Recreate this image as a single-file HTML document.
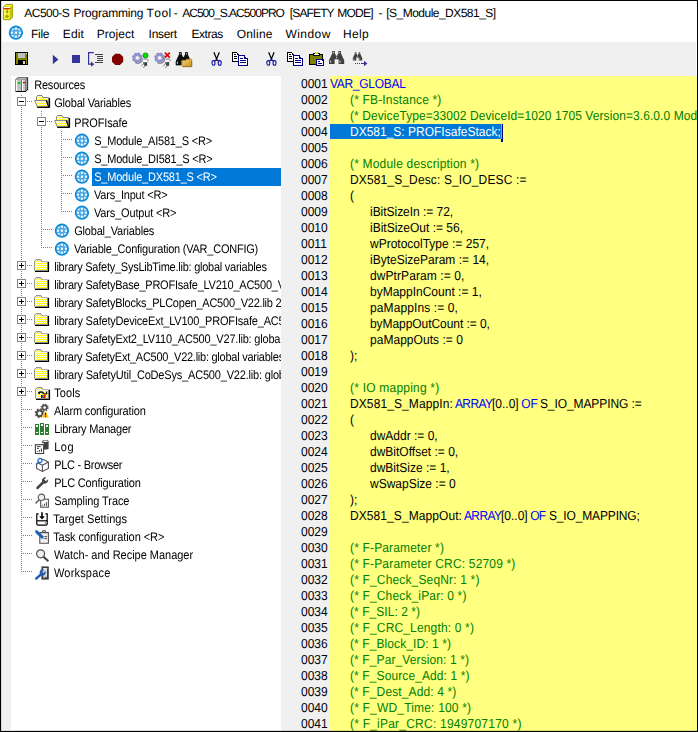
<!DOCTYPE html>
<html><head><meta charset="utf-8"><title>AC500-S Programming Tool</title>
<style>
html,body{margin:0;padding:0;background:#fff;}
body{text-rendering:geometricPrecision;width:698px;height:732px;overflow:hidden;position:relative;font-family:"Liberation Sans",sans-serif;}
#win{position:absolute;left:0;top:0;width:698px;height:732px;overflow:hidden;background:#fff;}
.abs{position:absolute;}
.t{position:absolute;white-space:pre;line-height:16px;height:16px;}
.ttl{font-size:12px;color:#000;font-kerning:none;}
.menu{font-size:12px;color:#000;}
.tr{font-size:11px;color:#000;transform:scaleY(1.13);transform-origin:0 0;}
.sel{color:#fff;}
.ln{font-size:12px;color:#000;left:301px;transform:scaleY(1.09);transform-origin:0 12px;}
.cd{font-size:12px;color:#000;transform:scaleY(1.09);transform-origin:0 12px;}
.k{color:#0000ff}.c{color:#008000}.n{color:#000}.s{color:#fff}
svg{position:absolute;overflow:visible;}
</style></head><body><div id="win">

<div class="abs" style="left:2px;top:42px;width:694px;height:34px;background:#f0f0f0"></div>
<div class="abs" style="left:2px;top:76px;width:9px;height:654px;background:#f0f0f0"></div>
<div class="abs" style="left:281px;top:76px;width:48px;height:655px;background:#f0f0f0"></div>
<div class="abs" style="left:329px;top:76px;width:368px;height:655px;background:#ffff80"></div>
<div class="abs" style="left:92px;top:168px;width:189px;height:18px;background:#0078d7"></div>
<div class="abs" style="left:330px;top:124px;width:171px;height:15px;background:#0078d7"></div>
<div class="abs" style="left:501px;top:124px;width:2px;height:18px;background:#00007f"></div>
<div class="abs" style="left:501px;top:124px;width:1px;height:15px;background:#ff8728"></div>
<svg style="left:3px;top:4px" width="11" height="17" viewBox="0 0 11 17"><path d="M0.4 3.2L3.2 0.4H9.5V13L7.3 15.7H0.4z" fill="#f8f83c" stroke="#8c8c00" stroke-width="0.9"/><path d="M7.3 3.2L9.5 0.6V13L7.3 15.6z" fill="#c4c400"/><path d="M0.5 3.1H7.3V15.5" fill="none" stroke="#b0b000" stroke-width="0.7"/><rect x="1" y="3.1" width="6" height="1.1" fill="#fff"/><rect x="1" y="4.1" width="6" height="1" fill="#e00010"/><path d="M2.8 5.9h2v1.4h-1.2h1.2v1.5h-2.1" fill="none" stroke="#8c8c00" stroke-width="0.9"/><rect x="1" y="9.1" width="2" height="0.9" fill="#fff"/><ellipse cx="4" cy="12.5" rx="2.1" ry="1.3" fill="#a8a800"/><path d="M4 10.8v3.4" stroke="#a8a800" stroke-width="1.4"/></svg>
<div class="t ttl" style="left:24.30px;top:5px;letter-spacing:-0.533px">AC500-S</div>
<div class="t ttl" style="left:73.40px;top:5px;letter-spacing:-0.192px">Programming</div>
<div class="t ttl" style="left:146.50px;top:5px;letter-spacing:0.450px">Tool</div>
<div class="t ttl" style="left:173.80px;top:5px;letter-spacing:0.000px">-</div>
<div class="t ttl" style="left:182.20px;top:5px;letter-spacing:-0.976px">AC500_S.AC500PRO</div>
<div class="t ttl" style="left:289.80px;top:5px;letter-spacing:-0.867px">[SAFETY</div>
<div class="t ttl" style="left:337.20px;top:5px;letter-spacing:-0.760px">MODE]</div>
<div class="t ttl" style="left:378.50px;top:5px;letter-spacing:0.000px">-</div>
<div class="t ttl" style="left:386.30px;top:5px;letter-spacing:-0.527px">[S_Module_DX581_S]</div>
<svg style="left:8.2px;top:24.4px" width="16" height="17" viewBox="0 0 16 17"><use href="#globe"/></svg>
<div class="t menu" style="left:31.02px;top:26px;letter-spacing:-0.300px">File</div>
<div class="t menu" style="left:62.84px;top:26px;letter-spacing:0.127px">Edit</div>
<div class="t menu" style="left:96.84px;top:26px;letter-spacing:0.007px">Project</div>
<div class="t menu" style="left:148.60px;top:26px;letter-spacing:-0.300px">Insert</div>
<div class="t menu" style="left:191.50px;top:26px;letter-spacing:-0.476px">Extras</div>
<div class="t menu" style="left:236.70px;top:26px;letter-spacing:0.212px">Online</div>
<div class="t menu" style="left:285.40px;top:26px;letter-spacing:0.468px">Window</div>
<div class="t menu" style="left:343.02px;top:26px;letter-spacing:0.340px">Help</div>
<svg width="0" height="0" style="position:absolute"><defs>
<pattern id="dith" width="2" height="2" patternUnits="userSpaceOnUse"><rect width="2" height="2" fill="#ffff00"/><rect width="1" height="1" fill="#fff"/><rect x="1" y="1" width="1" height="1" fill="#fff"/></pattern>
<linearGradient id="gold" x1="0" y1="0" x2="1" y2="1"><stop offset="0" stop-color="#f7d070"/><stop offset="1" stop-color="#c8901c"/></linearGradient>
<g id="globe"><circle cx="7.9" cy="8.7" r="6.4" fill="#48a8e8" stroke="#0a8ad8" stroke-width="1.5"/><g fill="#fff"><rect x="6.8" y="7.6" width="2.2" height="2.2"/><rect x="2.9" y="7.6" width="2" height="2.2"/><rect x="10.9" y="7.6" width="2" height="2.2"/><rect x="6.8" y="3.7" width="2.2" height="2"/><rect x="6.8" y="11.7" width="2.2" height="2"/><path d="M5.5 3.9v2.4H3.2zM10.3 3.9v2.4h2.3zM5.5 13.5v-2.4H3.2zM10.3 13.5v-2.4h2.3z"/></g></g>
<g id="fopen"><path d="M15 4h1.1v9.7H3.4L3 12.9h12z" fill="#000"/><path d="M2.5 6.6V2.7L3.5 1.5H8L9 3.5H14.5V7" fill="url(#dith)" stroke="#808080" stroke-width="1"/><path d="M3.4 6V3.2" stroke="#fff" stroke-width="0.8"/><path d="M12 6.4H15V13H14.6z" fill="#707070"/><path d="M0.6 6.5H12.2L14.6 13H3.3z" fill="url(#dith)"/><path d="M3.4 13L0.7 6.5H12" fill="none" stroke="#808080" stroke-width="1"/><path d="M1.8 7.4H11.6" stroke="#fff" stroke-width="0.8"/><path d="M12.1 6.3L14.7 13.1H3.4" stroke="#000" stroke-width="1.1" fill="none"/></g>
<g id="fclosed"><path d="M0.7 12.6V3.2L2 1.7H7L8 3.8H13.5V12.6z" fill="url(#dith)" stroke="#808080" stroke-width="1"/><path d="M1.7 12.4V4.3H13" fill="none" stroke="#fff" stroke-width="0.9"/><path d="M14 3.8H15.1V14H1V12.9H14z" fill="#000"/></g>
<g id="plus" shape-rendering="crispEdges"><rect x="0.5" y="0.5" width="8" height="8" fill="#fff" stroke="#848484"/><path d="M2 4h5v1H2zM4 2h1v5H4z" fill="#000"/></g>
<g id="minus" shape-rendering="crispEdges"><rect x="0.5" y="0.5" width="8" height="8" fill="#fff" stroke="#848484"/><path d="M2 4h5v1H2z" fill="#000"/></g>
<g id="gear"><path d="M2.6 9.6A4.6 4.6 0 0 0 9.8 6.6" fill="none" stroke="#8a8a8a" stroke-width="1.4" transform="translate(0.5,0.6)"/><circle cx="5.2" cy="5.7" r="3.5" fill="none" stroke="#9494cc" stroke-width="2.6"/><circle cx="5.2" cy="5.7" r="4.7" fill="none" stroke="#8c8cc6" stroke-width="1.5" stroke-dasharray="2.1 1.59"/><circle cx="5.2" cy="5.7" r="2.1" fill="#f6f6f6" stroke="#7c7ca8" stroke-width="0.5"/></g>
<g id="plug"><rect x="1.2" y="-0.4" width="4.6" height="2.6" fill="#fff"/><path d="M1.4 -0.5H5.4c0.7 0 0.7 2.6 0 2.6" fill="none" stroke="#505050" stroke-width="0.7"/><rect x="2.2" y="2.6" width="2.9" height="3.6" fill="#3c3c3c"/><rect x="1" y="2.4" width="1.2" height="1.8" fill="#10909a"/><path d="M1.2 4.6L-1 6.8M3.2 6.4L1 8.6" stroke="#303030" stroke-width="0.9" stroke-dasharray="1 0.8"/></g>
<g id="scis"><path d="M2.3 0.3L5.6 8.6M7.7 0.3L4.4 8.6" stroke="#000" stroke-width="1.2" fill="none"/><ellipse cx="1.9" cy="11" rx="1.5" ry="2.3" fill="none" stroke="#1414a8" stroke-width="1.1"/><ellipse cx="8.1" cy="11" rx="1.5" ry="2.3" fill="none" stroke="#1414a8" stroke-width="1.1"/><path d="M4.6 8.2L2.8 9.2M5.4 8.2L7.2 9.2" stroke="#1414a8" stroke-width="1.1"/></g>
<g id="copy" shape-rendering="crispEdges"><path d="M0 0h5l2 2v8H0z" fill="#000"/><path d="M1 1h4v2h1v6H1z" fill="#fff"/><path d="M2 2h2v1H2zM2 4h3v1H2zM2 6h3v1H2z" fill="#000"/><path d="M6 3h7l3 3v8H6z" fill="#000080"/><path d="M7 4h5v3h3v6H7z" fill="#fff"/><path d="M8 6h3v1H8zM8 8h6v1H8zM8 10h6v1H8z" fill="#000080"/><path d="M13 4h1v1h-1zM14 5h1v1h-1z" fill="#fff"/></g>
<g id="bino"><path d="M3.2 0h2.6v2.5l1 1.2v1h1.6v-1l1-1.2V0H12v2.5l3.2 6.7V13H9.6V8.2H5.6V13H0V9.2l3.2-6.7z" fill="#404040"/><path d="M4.5 1v1.2M10.7 1v1.2M1.6 9.5v2.2M11 9.5v2.2M7.6 5.6v1.6" stroke="#e8e8e8" stroke-width="0.9"/></g>
</defs></svg><svg style="left:0;top:42px" width="698" height="34" viewBox="0 42 698 34"><g shape-rendering="crispEdges"><rect x="15" y="52" width="13" height="13" fill="#000"/><rect x="16" y="53" width="11" height="11" fill="#808000"/><rect x="18" y="53" width="7" height="5" fill="#c0c0c0"/><rect x="26" y="53" width="1" height="1" fill="#fff"/><rect x="18" y="60" width="8" height="4" fill="#000"/><rect x="23" y="61" width="2" height="3" fill="#d8d8d8"/><rect x="17" y="58" width="9" height="1" fill="#808000"/></g><path d="M52.8 54.8L58.4 59.5L52.8 64.2z" fill="#333399"/><rect x="72" y="55" width="8" height="8" fill="#333399" shape-rendering="crispEdges"/><path d="M93.8 52.6H88.6V64.2H92" fill="none" stroke="#333399" stroke-width="1.2"/><path d="M91 61.6L94.2 64.2L91 66.8z" fill="#333399"/><g shape-rendering="crispEdges" fill="#404040"><rect x="95" y="54" width="8" height="1"/><rect x="97" y="56" width="6" height="1"/><rect x="97" y="58" width="6" height="1"/><rect x="97" y="60" width="6" height="1"/><rect x="95" y="62" width="8" height="1"/></g><path d="M115.3 53.8h4.6l3.3 3.3v4.6l-3.3 3.3h-4.6l-3.3-3.3v-4.6z" fill="#800000"/><use href="#gear" x="132.2" y="52.2"/><circle cx="145.5" cy="55.4" r="2.5" fill="#00e000" stroke="#008c00" stroke-width="0.8"/><use href="#plug" x="142" y="59.6"/><use href="#gear" x="154.4" y="52.2"/><path d="M164.8 52.6L169.8 57.6M169.8 52.6L164.8 57.6" stroke="#e00000" stroke-width="1.7"/><use href="#plug" x="164" y="59.6"/><g transform="translate(175.8,52.2)"><use href="#bino" fill="#000"/><path d="M3.2 0h2.6v2.5l1 1.2v1h1.6v-1l1-1.2V0H12v2.5l3.2 6.7V13H9.6V8.2H5.6V13H0V9.2l3.2-6.7z" fill="#101010"/><path d="M1.6 9.5v2.2M4.5 1v1.2M10.7 1v1.2" stroke="#e8e8e8" stroke-width="0.9"/></g><path d="M182.3 60.4h3.2l1 -1.2h5.2v7.4h-9.4z" fill="url(#gold)" stroke="#b88a20" stroke-width="0.6"/><path d="M182.3 66.6h9.4v-6" fill="none" stroke="#8a6a10" stroke-width="0.8"/><use href="#scis" x="211.6" y="51.9"/><use href="#copy" x="231.8" y="52"/><use href="#scis" x="266.4" y="51.9"/><use href="#copy" x="286.6" y="52"/><g shape-rendering="crispEdges"><rect x="309" y="54" width="14" height="11" fill="#000"/><rect x="310" y="55" width="12" height="9" fill="#808000"/><rect x="313" y="53" width="7" height="3" fill="#000"/><rect x="314" y="54" width="5" height="1" fill="#fff"/><rect x="315" y="52" width="3" height="2" fill="#e0e000"/><rect x="316" y="59" width="8" height="7" fill="#000080"/><rect x="317" y="60" width="6" height="5" fill="#fff"/><rect x="318" y="61" width="2" height="1" fill="#000080"/><rect x="318" y="63" width="4" height="1" fill="#000080"/><rect x="322" y="60" width="1" height="1" fill="#000080"/></g><use href="#bino" x="329" y="51"/><g transform="translate(352.8,52.2) scale(0.62,0.64)"><use href="#bino"/></g><g fill="#333399" shape-rendering="crispEdges"><rect x="355" y="63" width="1" height="1"/><rect x="357" y="63" width="1" height="1"/><rect x="359" y="63" width="1" height="1"/><rect x="361" y="63" width="4" height="1"/></g><path d="M364 60.8L367.4 63.5L364 66.2z" fill="#333399"/></svg>
<svg style="left:0;top:76px" width="281" height="656" viewBox="0 76 281 656"><path d="M21.5 95V572" stroke="#808080" stroke-width="1" stroke-dasharray="1 1" fill="none" shape-rendering="crispEdges"/><path d="M41.5 111V248" stroke="#808080" stroke-width="1" stroke-dasharray="1 1" fill="none" shape-rendering="crispEdges"/><path d="M61.5 131V212" stroke="#808080" stroke-width="1" stroke-dasharray="1 1" fill="none" shape-rendering="crispEdges"/><path d="M63 139.5H73" stroke="#808080" stroke-width="1" stroke-dasharray="1 1" fill="none" shape-rendering="crispEdges"/><path d="M63 157.5H73" stroke="#808080" stroke-width="1" stroke-dasharray="1 1" fill="none" shape-rendering="crispEdges"/><path d="M63 175.5H73" stroke="#808080" stroke-width="1" stroke-dasharray="1 1" fill="none" shape-rendering="crispEdges"/><path d="M63 193.5H73" stroke="#808080" stroke-width="1" stroke-dasharray="1 1" fill="none" shape-rendering="crispEdges"/><path d="M63 211.5H73" stroke="#808080" stroke-width="1" stroke-dasharray="1 1" fill="none" shape-rendering="crispEdges"/><path d="M43 229.5H53" stroke="#808080" stroke-width="1" stroke-dasharray="1 1" fill="none" shape-rendering="crispEdges"/><path d="M43 247.5H53" stroke="#808080" stroke-width="1" stroke-dasharray="1 1" fill="none" shape-rendering="crispEdges"/><path d="M27 101.5H33" stroke="#808080" stroke-width="1" stroke-dasharray="1 1" fill="none" shape-rendering="crispEdges"/><path d="M47 121.5H53" stroke="#808080" stroke-width="1" stroke-dasharray="1 1" fill="none" shape-rendering="crispEdges"/><path d="M27 265.5H33" stroke="#808080" stroke-width="1" stroke-dasharray="1 1" fill="none" shape-rendering="crispEdges"/><path d="M27 283.5H33" stroke="#808080" stroke-width="1" stroke-dasharray="1 1" fill="none" shape-rendering="crispEdges"/><path d="M27 301.5H33" stroke="#808080" stroke-width="1" stroke-dasharray="1 1" fill="none" shape-rendering="crispEdges"/><path d="M27 319.5H33" stroke="#808080" stroke-width="1" stroke-dasharray="1 1" fill="none" shape-rendering="crispEdges"/><path d="M27 337.5H33" stroke="#808080" stroke-width="1" stroke-dasharray="1 1" fill="none" shape-rendering="crispEdges"/><path d="M27 355.5H33" stroke="#808080" stroke-width="1" stroke-dasharray="1 1" fill="none" shape-rendering="crispEdges"/><path d="M27 373.5H33" stroke="#808080" stroke-width="1" stroke-dasharray="1 1" fill="none" shape-rendering="crispEdges"/><path d="M27 391.5H33" stroke="#808080" stroke-width="1" stroke-dasharray="1 1" fill="none" shape-rendering="crispEdges"/><path d="M23 409.5H32" stroke="#808080" stroke-width="1" stroke-dasharray="1 1" fill="none" shape-rendering="crispEdges"/><path d="M23 427.5H32" stroke="#808080" stroke-width="1" stroke-dasharray="1 1" fill="none" shape-rendering="crispEdges"/><path d="M23 445.5H32" stroke="#808080" stroke-width="1" stroke-dasharray="1 1" fill="none" shape-rendering="crispEdges"/><path d="M23 463.5H32" stroke="#808080" stroke-width="1" stroke-dasharray="1 1" fill="none" shape-rendering="crispEdges"/><path d="M23 481.5H32" stroke="#808080" stroke-width="1" stroke-dasharray="1 1" fill="none" shape-rendering="crispEdges"/><path d="M23 499.5H32" stroke="#808080" stroke-width="1" stroke-dasharray="1 1" fill="none" shape-rendering="crispEdges"/><path d="M23 517.5H32" stroke="#808080" stroke-width="1" stroke-dasharray="1 1" fill="none" shape-rendering="crispEdges"/><path d="M23 535.5H32" stroke="#808080" stroke-width="1" stroke-dasharray="1 1" fill="none" shape-rendering="crispEdges"/><path d="M23 553.5H32" stroke="#808080" stroke-width="1" stroke-dasharray="1 1" fill="none" shape-rendering="crispEdges"/><path d="M23 571.5H32" stroke="#808080" stroke-width="1" stroke-dasharray="1 1" fill="none" shape-rendering="crispEdges"/><use href="#minus" x="17" y="97"/><use href="#minus" x="37" y="117"/><use href="#plus" x="17" y="261"/><use href="#plus" x="17" y="279"/><use href="#plus" x="17" y="297"/><use href="#plus" x="17" y="315"/><use href="#plus" x="17" y="333"/><use href="#plus" x="17" y="351"/><use href="#plus" x="17" y="369"/><use href="#plus" x="17" y="387"/></svg>
<div class="abs" style="left:11px;top:76px;width:270px;height:654px;overflow:hidden;will-change:transform">
<svg style="left:3px;top:0px" width="17" height="18" viewBox="0 0 17 18"><g><path d="M1 4.2L4 1.3H14.1V13.6L11.6 16H1.6z" fill="#000"/><path d="M1.2 4L4 1.5H13.4L11.5 4z" fill="#b4b4b4" stroke="#707070" stroke-width="0.6"/><rect x="1" y="4" width="6" height="11" fill="#c0c0c0"/><rect x="1" y="4" width="1" height="11" fill="#909090"/><rect x="2" y="4" width="1.2" height="11" fill="#fff"/><rect x="7" y="4" width="1" height="11" fill="#707070"/><rect x="8" y="4" width="3.6" height="11" fill="#c4c4c4"/><rect x="8" y="4" width="1.1" height="11" fill="#fff"/><path d="M11.6 4L13.4 1.8V13.2L11.6 15z" fill="#9a9a9a"/><rect x="3.8" y="6" width="2.6" height="2" fill="#00d000"/><rect x="8.9" y="6" width="2.2" height="1.2" fill="#a00000"/></g></svg>
<div class="t tr" style="left:23.20px;top:0.5px;letter-spacing:-0.200px">Resources</div>
<svg style="left:23px;top:18px" width="17" height="18" viewBox="0 0 17 18"><use href="#fopen"/></svg>
<div class="t tr" style="left:43.20px;top:18.5px;letter-spacing:-0.195px">Global Variables</div>
<svg style="left:43px;top:38px" width="17" height="18" viewBox="0 0 17 18"><use href="#fopen"/></svg>
<div class="t tr" style="left:63.20px;top:38.5px;letter-spacing:-0.130px">PROFIsafe</div>
<svg style="left:63px;top:56px" width="17" height="18" viewBox="0 0 17 18"><use href="#globe"/></svg>
<div class="t tr" style="left:83.20px;top:56.5px;letter-spacing:-0.200px">S_Module_AI581_S &lt;R&gt;</div>
<svg style="left:63px;top:74px" width="17" height="18" viewBox="0 0 17 18"><use href="#globe"/></svg>
<div class="t tr" style="left:83.20px;top:74.5px;letter-spacing:-0.200px">S_Module_DI581_S &lt;R&gt;</div>
<svg style="left:63px;top:92px" width="17" height="18" viewBox="0 0 17 18"><use href="#globe"/></svg>
<div class="t tr sel" style="left:83.20px;top:92.5px;letter-spacing:-0.200px">S_Module_DX581_S &lt;R&gt;</div>
<svg style="left:63px;top:110px" width="17" height="18" viewBox="0 0 17 18"><use href="#globe"/></svg>
<div class="t tr" style="left:83.00px;top:110.5px;letter-spacing:-0.200px">Vars_Input &lt;R&gt;</div>
<svg style="left:63px;top:128px" width="17" height="18" viewBox="0 0 17 18"><use href="#globe"/></svg>
<div class="t tr" style="left:83.00px;top:128.5px;letter-spacing:-0.160px">Vars_Output &lt;R&gt;</div>
<svg style="left:43px;top:146px" width="17" height="18" viewBox="0 0 17 18"><use href="#globe"/></svg>
<div class="t tr" style="left:63.20px;top:146.5px;letter-spacing:-0.189px">Global_Variables</div>
<svg style="left:43px;top:164px" width="17" height="18" viewBox="0 0 17 18"><use href="#globe"/></svg>
<div class="t tr" style="left:63.00px;top:164.5px;letter-spacing:-0.233px">Variable_Configuration (VAR_CONFIG)</div>
<svg style="left:23px;top:182px" width="17" height="18" viewBox="0 0 17 18"><use href="#fclosed"/></svg>
<div class="t tr" style="left:43.20px;top:182.5px;letter-spacing:-0.245px">library Safety_SysLibTime.lib: global variables</div>
<svg style="left:23px;top:200px" width="17" height="18" viewBox="0 0 17 18"><use href="#fclosed"/></svg>
<div class="t tr" style="left:43.20px;top:200.5px;letter-spacing:-0.226px">library SafetyBase_PROFIsafe_LV210_AC500_V22.lib</div>
<svg style="left:23px;top:218px" width="17" height="18" viewBox="0 0 17 18"><use href="#fclosed"/></svg>
<div class="t tr" style="left:43.20px;top:218.5px;letter-spacing:-0.227px">library SafetyBlocks_PLCopen_AC500_V22.lib 2</div>
<svg style="left:23px;top:236px" width="17" height="18" viewBox="0 0 17 18"><use href="#fclosed"/></svg>
<div class="t tr" style="left:43.20px;top:236.5px;letter-spacing:-0.200px">library SafetyDeviceExt_LV100_PROFIsafe_AC500_V27</div>
<svg style="left:23px;top:254px" width="17" height="18" viewBox="0 0 17 18"><use href="#fclosed"/></svg>
<div class="t tr" style="left:43.20px;top:254.5px;letter-spacing:-0.200px">library SafetyExt2_LV110_AC500_V27.lib: global</div>
<svg style="left:23px;top:272px" width="17" height="18" viewBox="0 0 17 18"><use href="#fclosed"/></svg>
<div class="t tr" style="left:43.20px;top:272.5px;letter-spacing:-0.254px">library SafetyExt_AC500_V22.lib: global variables</div>
<svg style="left:23px;top:290px" width="17" height="18" viewBox="0 0 17 18"><use href="#fclosed"/></svg>
<div class="t tr" style="left:43.20px;top:290.5px;letter-spacing:-0.184px">library SafetyUtil_CoDeSys_AC500_V22.lib: global</div>
<svg style="left:23px;top:308px" width="17" height="18" viewBox="0 0 17 18"><g transform="translate(1,2)"><use href="#fclosed"/></g><path d="M4.4 9.6L6 8l2.4 0.2l1.6 1.8M10.4 10.2l2.2-0.4v-2.4M4.4 8.2l1.4 1.6" fill="none" stroke="#000" stroke-width="1.3"/><rect x="7" y="11" width="1.5" height="3" fill="#0000e0"/><rect x="9.8" y="11" width="1.8" height="3" fill="#f00000"/><rect x="8.5" y="11" width="1.3" height="3" fill="#000" opacity="0.55"/></svg>
<div class="t tr" style="left:43.20px;top:308.5px;letter-spacing:0.120px">Tools</div>
<svg style="left:23px;top:326px" width="17" height="18" viewBox="0 0 17 18"><g><circle cx="5.6" cy="11.3" r="2.9" fill="none" stroke="#505050" stroke-width="2"/><circle cx="5.6" cy="11.3" r="4.1" fill="none" stroke="#505050" stroke-width="1.5" stroke-dasharray="1.6 1.62"/><circle cx="10.6" cy="5.6" r="2.2" fill="none" stroke="#505050" stroke-width="1.6"/><circle cx="10.6" cy="5.6" r="3.3" fill="none" stroke="#505050" stroke-width="1.4" stroke-dasharray="1.4 1.2"/><path d="M11.5 8.6L15.4 15.8H7.6z" fill="#ffc20e" stroke="#fff" stroke-width="0.5"/><path d="M11.5 10.8v2.6M11.5 14.2v1" stroke="#222" stroke-width="1.1"/></g></svg>
<div class="t tr" style="left:43.00px;top:326.5px;letter-spacing:-0.164px">Alarm configuration</div>
<svg style="left:23px;top:344px" width="17" height="18" viewBox="0 0 17 18"><g shape-rendering="crispEdges" fill="#2e7d32"><rect x="1" y="4" width="4" height="11"/><rect x="6" y="3" width="4" height="12"/><rect x="11" y="4" width="4" height="11"/><g fill="#fff"><rect x="2" y="5" width="2" height="2"/><rect x="7" y="4" width="2" height="2"/><rect x="12" y="5" width="2" height="2"/><rect x="2" y="12" width="2" height="1"/><rect x="7" y="12" width="2" height="1"/><rect x="12" y="12" width="2" height="1"/></g></g></svg>
<div class="t tr" style="left:43.20px;top:344.5px;letter-spacing:-0.200px">Library Manager</div>
<svg style="left:23px;top:362px" width="17" height="18" viewBox="0 0 17 18"><g><path d="M8.2 3.2c0-1.6 6.4-1.6 6.4 0v7.2c0 1.5-6.4 1.5-6.4 0z" fill="#404040"/><ellipse cx="11.4" cy="3.2" rx="2.6" ry="0.8" fill="#fff"/><path d="M8.2 5v5.4c0 0.8 1 1.2 1.8 1.2V5z" fill="#fff" opacity="0.9"/><rect x="1.4" y="6.7" width="8.2" height="8.8" fill="#fff" stroke="#404040" stroke-width="1.1"/><path d="M3 8.6h3.6M3 10.4h2" stroke="#404040" stroke-width="1"/><path d="M3.4 13.8v-0.9M5.4 13.8v-1.8M7.4 13.8v-3.4" stroke="#404040" stroke-width="1.1"/></g></svg>
<div class="t tr" style="left:43.20px;top:362.5px;letter-spacing:0.560px">Log</div>
<svg style="left:23px;top:380px" width="17" height="18" viewBox="0 0 17 18"><g fill="none" stroke="#505050" stroke-width="1.1"><path d="M8.4 3L14.4 6V12.4L8.4 15.4L2.6 12.4V8"/><path d="M8.4 9.2L14.4 6M8.4 9.2V15.4M8.4 9.2L4 7"/><circle cx="6" cy="4.6" r="2.1" stroke="#1e6fc8" stroke-width="1.3" fill="#fff"/><path d="M4.5 6.2L2 8.6" stroke="#1e6fc8" stroke-width="1.5"/></g></svg>
<div class="t tr" style="left:43.20px;top:380.5px;letter-spacing:-0.273px">PLC - Browser</div>
<svg style="left:23px;top:398px" width="17" height="18" viewBox="0 0 17 18"><path d="M2.4 13.2L8.2 7.6C7.4 5.4 9.4 2.9 12.2 3.4L10.2 5.6L11.9 7.3L14.1 5.3C14.6 8 12.2 10.2 9.9 9.4L4.2 14.9C3.1 15.8 1.6 14.4 2.4 13.2z" fill="#404040"/></svg>
<div class="t tr" style="left:43.20px;top:398.5px;letter-spacing:-0.200px">PLC Configuration</div>
<svg style="left:23px;top:416px" width="17" height="18" viewBox="0 0 17 18"><g><rect x="6.7" y="7.2" width="7.7" height="8" fill="#fff" stroke="#505050" stroke-width="1.1"/><path d="M8.6 13.8v-1M10.5 13.8v-2M12.4 13.8v-3.6" stroke="#505050" stroke-width="1.1"/><circle cx="7.4" cy="5.3" r="3.2" fill="#eef0f6" stroke="#606060" stroke-width="1.1"/><path d="M5.2 7.8L1.6 11.4" stroke="#606060" stroke-width="1.5"/></g></svg>
<div class="t tr" style="left:43.20px;top:416.5px;letter-spacing:-0.089px">Sampling Trace</div>
<svg style="left:23px;top:434px" width="17" height="18" viewBox="0 0 17 18"><g fill="none" stroke="#000" stroke-width="1.2"><path d="M4.6 3.8H2.8V14c0 0.8 0.4 1.2 1.2 1.2h8c0.8 0 1.2-0.4 1.2-1.2V3.8h-1.8"/><path d="M2.8 10.8H13.2"/><path d="M8 2.2V7" stroke-width="1.6"/><path d="M5.2 6.2h5.6L8 9.6z" fill="#000" stroke="none"/><circle cx="11.4" cy="13" r="0.6" fill="#000" stroke="none"/></g></svg>
<div class="t tr" style="left:42.20px;top:434.5px;letter-spacing:0.029px">Target Settings</div>
<svg style="left:23px;top:452px" width="17" height="18" viewBox="0 0 17 18"><g><path d="M5.8 4.6h8.6v10.6H5.8z" fill="#f4f4f4" stroke="#505050" stroke-width="1.1"/><path d="M8.2 4.4c0-2.4 3.6-2.4 3.6 0" fill="none" stroke="#505050" stroke-width="1.1"/><path d="M10.4 8.6h2.6M10.4 10.6h2.6" stroke="#505050" stroke-width="1"/><path d="M2.2 3.4L9 9.8" stroke="#1e5fb4" stroke-width="3"/><path d="M1.4 2.4L2.6 3.6" stroke="#1e5fb4" stroke-width="1.6"/><path d="M9.4 10.2l1 1" stroke="#88a" stroke-width="1.2"/></g></svg>
<div class="t tr" style="left:42.20px;top:452.5px;letter-spacing:-0.063px">Task configuration &lt;R&gt;</div>
<svg style="left:23px;top:470px" width="17" height="18" viewBox="0 0 17 18"><g><circle cx="6.6" cy="7.8" r="4" fill="#eceef4" stroke="#505050" stroke-width="1.2"/><path d="M9.6 10.9L14.4 15.2" stroke="#484848" stroke-width="2.1"/></g></svg>
<div class="t tr" style="left:43.00px;top:470.5px;letter-spacing:-0.020px">Watch- and Recipe Manager</div>
<svg style="left:23px;top:488px" width="17" height="18" viewBox="0 0 17 18"><g><rect x="7.4" y="2.4" width="7.4" height="13.2" fill="#404040"/><rect x="9.2" y="4.4" width="3.8" height="9.2" fill="#d8d8d8"/><path d="M9.2 4.2h4v1.2h-4z" fill="#fff"/><circle cx="12.2" cy="13.4" r="0.7" fill="#404040"/><path d="M2.2 14.6L7.4 10" stroke="#1e5fb4" stroke-width="2.4" stroke-linecap="round"/><circle cx="8.6" cy="8.6" r="2" fill="none" stroke="#1e5fb4" stroke-width="2"/><path d="M8.8 8.4L11.4 5.6" stroke="#d8d8d8" stroke-width="1.6"/></g></svg>
<div class="t tr" style="left:43.00px;top:488.5px;letter-spacing:0.180px">Workspace</div>
</div>
<div class="abs" style="left:281px;top:76px;width:416px;height:655px;overflow:hidden">
<div class="t ln" style="left:20px;top:0px">0001</div>
<div class="t cd k" style="left:49.00px;top:0px;letter-spacing:-0.284px">VAR_GLOBAL</div>
<div class="t ln" style="left:20px;top:16px">0002</div>
<div class="t cd c" style="left:69.00px;top:16px;letter-spacing:0.165px">(* FB-Instance *)</div>
<div class="t ln" style="left:20px;top:32px">0003</div>
<div class="t cd c" style="left:69.00px;top:32px;letter-spacing:0.081px">(* DeviceType=33002 DeviceId=1020 1705 Version=3.6.0.0 Mod</div>
<div class="t ln" style="left:20px;top:48px">0004</div>
<div class="t cd s" style="left:69.00px;top:48px;letter-spacing:0.000px">DX581_S: PROFIsafeStack;</div>
<div class="t ln" style="left:20px;top:64px">0005</div>
<div class="t ln" style="left:20px;top:80px">0006</div>
<div class="t cd c" style="left:69.00px;top:80px;letter-spacing:0.188px">(* Module description *)</div>
<div class="t ln" style="left:20px;top:96px">0007</div>
<div class="t cd n" style="left:69.00px;top:96px;letter-spacing:0.134px">DX581_S_Desc: S_IO_DESC :=</div>
<div class="t ln" style="left:20px;top:112px">0008</div>
<div class="t cd n" style="left:69.00px;top:112px;letter-spacing:0.000px">(</div>
<div class="t ln" style="left:20px;top:128px">0009</div>
<div class="t cd n" style="left:89.00px;top:128px;letter-spacing:-0.035px">iBitSizeIn := 72,</div>
<div class="t ln" style="left:20px;top:144px">0010</div>
<div class="t cd n" style="left:89.00px;top:144px;letter-spacing:0.000px">iBitSizeOut := 56,</div>
<div class="t ln" style="left:20px;top:160px">0011</div>
<div class="t cd n" style="left:89.00px;top:160px;letter-spacing:0.000px">wProtocolType := 257,</div>
<div class="t ln" style="left:20px;top:176px">0012</div>
<div class="t cd n" style="left:89.00px;top:176px;letter-spacing:0.000px">iByteSizeParam := 14,</div>
<div class="t ln" style="left:20px;top:192px">0013</div>
<div class="t cd n" style="left:89.00px;top:192px;letter-spacing:0.080px">dwPtrParam := 0,</div>
<div class="t ln" style="left:20px;top:208px">0014</div>
<div class="t cd n" style="left:89.00px;top:208px;letter-spacing:0.000px">byMappInCount := 1,</div>
<div class="t ln" style="left:20px;top:224px">0015</div>
<div class="t cd n" style="left:89.00px;top:224px;letter-spacing:0.103px">paMappIns := 0,</div>
<div class="t ln" style="left:20px;top:240px">0016</div>
<div class="t cd n" style="left:89.00px;top:240px;letter-spacing:-0.059px">byMappOutCount := 0,</div>
<div class="t ln" style="left:20px;top:256px">0017</div>
<div class="t cd n" style="left:89.00px;top:256px;letter-spacing:0.034px">paMappOuts := 0</div>
<div class="t ln" style="left:20px;top:272px">0018</div>
<div class="t cd n" style="left:69.00px;top:272px;letter-spacing:0.000px">);</div>
<div class="t ln" style="left:20px;top:288px">0019</div>
<div class="t ln" style="left:20px;top:304px">0020</div>
<div class="t cd c" style="left:69.00px;top:304px;letter-spacing:0.213px">(* IO mapping *)</div>
<div class="t ln" style="left:20px;top:320px">0021</div>
<div class="t cd n" style="left:69.00px;top:320px;letter-spacing:0.097px">DX581_S_MappIn: </div>
<div class="t cd k" style="left:174.00px;top:320px;letter-spacing:-0.640px">ARRAY</div>
<div class="t cd n" style="left:211.00px;top:320px;letter-spacing:0.000px">[0..0] </div>
<div class="t cd k" style="left:240.20px;top:320px;letter-spacing:0.000px">OF</div>
<div class="t cd n" style="left:255.70px;top:320px;letter-spacing:-0.086px"> S_IO_MAPPING :=</div>
<div class="t ln" style="left:20px;top:336px">0022</div>
<div class="t cd n" style="left:69.00px;top:336px;letter-spacing:0.000px">(</div>
<div class="t ln" style="left:20px;top:352px">0023</div>
<div class="t cd n" style="left:89.00px;top:352px;letter-spacing:0.000px">dwAddr := 0,</div>
<div class="t ln" style="left:20px;top:368px">0024</div>
<div class="t cd n" style="left:89.00px;top:368px;letter-spacing:0.000px">dwBitOffset := 0,</div>
<div class="t ln" style="left:20px;top:384px">0025</div>
<div class="t cd n" style="left:89.00px;top:384px;letter-spacing:0.000px">dwBitSize := 1,</div>
<div class="t ln" style="left:20px;top:400px">0026</div>
<div class="t cd n" style="left:89.00px;top:400px;letter-spacing:0.000px">wSwapSize := 0</div>
<div class="t ln" style="left:20px;top:416px">0027</div>
<div class="t cd n" style="left:69.00px;top:416px;letter-spacing:0.000px">);</div>
<div class="t ln" style="left:20px;top:432px">0028</div>
<div class="t cd n" style="left:69.00px;top:432px;letter-spacing:0.080px">DX581_S_MappOut: </div>
<div class="t cd k" style="left:183.00px;top:432px;letter-spacing:-0.640px">ARRAY</div>
<div class="t cd n" style="left:220.00px;top:432px;letter-spacing:0.000px">[0..0] </div>
<div class="t cd k" style="left:249.36px;top:432px;letter-spacing:-1.040px">OF</div>
<div class="t cd n" style="left:264.78px;top:432px;letter-spacing:-0.147px"> S_IO_MAPPING;</div>
<div class="t ln" style="left:20px;top:448px">0029</div>
<div class="t ln" style="left:20px;top:464px">0030</div>
<div class="t cd c" style="left:69.00px;top:464px;letter-spacing:0.160px">(* F-Parameter *)</div>
<div class="t ln" style="left:20px;top:480px">0031</div>
<div class="t cd c" style="left:69.00px;top:480px;letter-spacing:0.172px">(* F-Parameter CRC: 52709 *)</div>
<div class="t ln" style="left:20px;top:496px">0032</div>
<div class="t cd c" style="left:69.00px;top:496px;letter-spacing:0.160px">(* F_Check_SeqNr: 1 *)</div>
<div class="t ln" style="left:20px;top:512px">0033</div>
<div class="t cd c" style="left:69.00px;top:512px;letter-spacing:0.152px">(* F_Check_iPar: 0 *)</div>
<div class="t ln" style="left:20px;top:528px">0034</div>
<div class="t cd c" style="left:69.00px;top:528px;letter-spacing:0.049px">(* F_SIL: 2 *)</div>
<div class="t ln" style="left:20px;top:544px">0035</div>
<div class="t cd c" style="left:69.00px;top:544px;letter-spacing:0.160px">(* F_CRC_Length: 0 *)</div>
<div class="t ln" style="left:20px;top:560px">0036</div>
<div class="t cd c" style="left:69.00px;top:560px;letter-spacing:0.089px">(* F_Block_ID: 1 *)</div>
<div class="t ln" style="left:20px;top:576px">0037</div>
<div class="t cd c" style="left:69.00px;top:576px;letter-spacing:0.107px">(* F_Par_Version: 1 *)</div>
<div class="t ln" style="left:20px;top:592px">0038</div>
<div class="t cd c" style="left:69.00px;top:592px;letter-spacing:0.104px">(* F_Source_Add: 1 *)</div>
<div class="t ln" style="left:20px;top:608px">0039</div>
<div class="t cd c" style="left:69.00px;top:608px;letter-spacing:0.124px">(* F_Dest_Add: 4 *)</div>
<div class="t ln" style="left:20px;top:624px">0040</div>
<div class="t cd c" style="left:69.00px;top:624px;letter-spacing:0.185px">(* F_WD_Time: 100 *)</div>
<div class="t ln" style="left:20px;top:640px">0041</div>
<div class="t cd c" style="left:69.00px;top:640px;letter-spacing:0.221px">(* F_iPar_CRC: 1949707170 *)</div>
</div>
<div class="abs" style="left:0;top:0;width:698px;height:1px;background:#000"></div>
<div class="abs" style="left:0;top:731px;width:698px;height:1px;background:#000"></div>
<div class="abs" style="left:0;top:730px;width:698px;height:1px;background:rgba(0,0,0,0.12)"></div>
<div class="abs" style="left:0;top:0;width:1px;height:732px;background:#000"></div>
<div class="abs" style="left:1px;top:0;width:1px;height:732px;background:rgba(0,0,0,0.15)"></div>
<div class="abs" style="left:697px;top:0;width:1px;height:732px;background:#000"></div>
</div></body></html>
